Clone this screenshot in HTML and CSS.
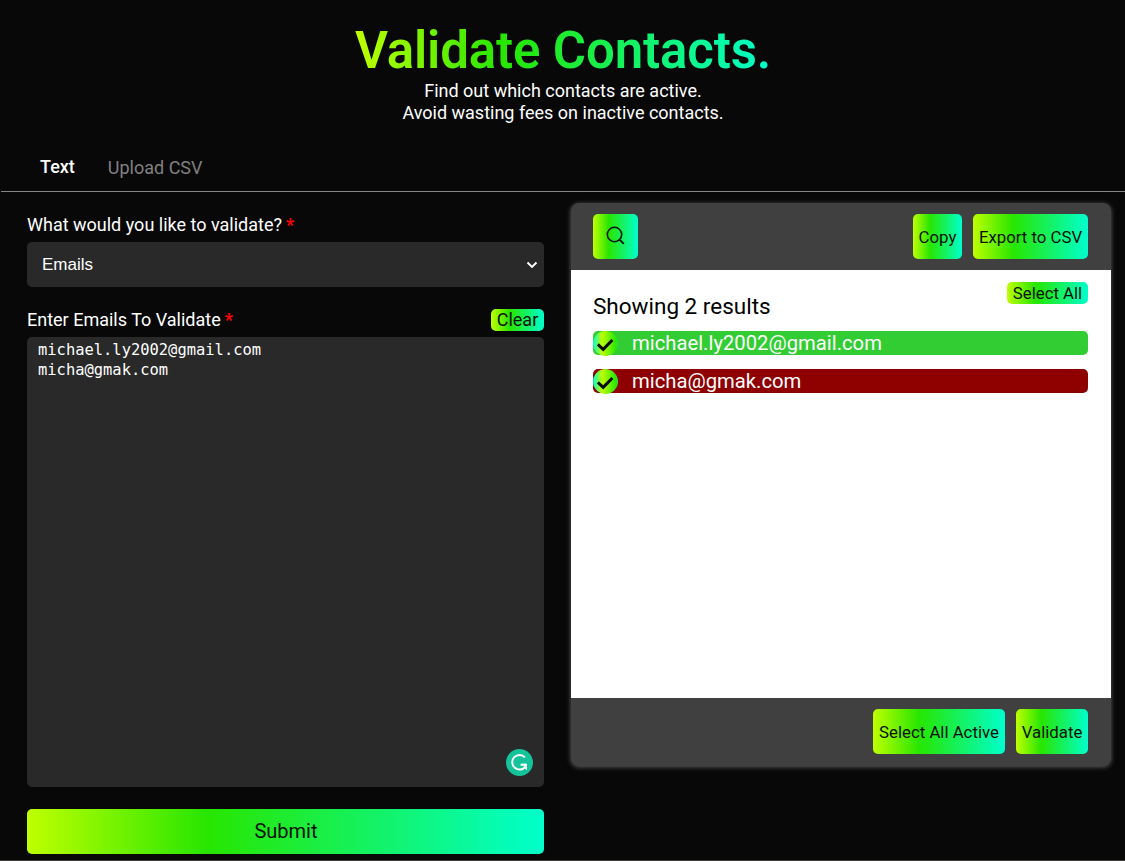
FILE: index.html
```html
<!DOCTYPE html>
<html lang="en">
<head>
<meta charset="utf-8">
<title>Validate Contacts</title>
<link rel="stylesheet" href="styles.css">
</head>
<body>
<div class="page">
  <header class="hero">
    <h1 class="title">Validate Contacts.</h1>
    <p class="subtitle">Find out which contacts are active.<br>Avoid wasting fees on inactive contacts.</p>
  </header>
  <nav class="tabs">
    <span class="tab tab-active">Text</span>
    <span class="tab">Upload CSV</span>
  </nav>
  <main class="columns">
    <section class="form">
      <div class="label-row"><label class="label">What would you like to validate? <b class="required">*</b></label></div>
      <div class="select">
        <span>Emails</span>
        <svg class="chevron" viewBox="0 0 12 8"><path d="M1.5 1.5 L6 5.9 L10.5 1.5" fill="none" stroke="#fff" stroke-width="2"/></svg>
      </div>
      <div class="label-row label-row-second">
        <label class="label">Enter Emails To Validate <b class="required">*</b></label>
        <button class="btn btn-clear">Clear</button>
      </div>
      <div class="textarea">
        <div class="lines">michael.ly2002@gmail.com<br>micha@gmak.com</div>
        <svg class="badge" viewBox="0 0 27 27"><circle cx="13.5" cy="13.5" r="13.5" fill="#15c39a"/><path d="M18.9 8.3 A7.3 7.3 0 1 0 19.4 17.6 M14.6 15.7 H20" fill="none" stroke="#fff" stroke-width="1.9"/><path d="M15.2 14.8 H21 V21.2 L19 19.4 L17.6 18.6 L18.8 16.6 H15.2 Z" fill="#fff"/></svg>
      </div>
      <button class="btn btn-submit">Submit</button>
    </section>
    <section class="results">
      <div class="bar">
        <button class="btn btn-tool btn-search"><svg class="search-icon" viewBox="0 0 19 19"><circle cx="8.5" cy="8.5" r="7.2" fill="none" stroke="#071007" stroke-width="1.5"/><path d="M13.3 13.3 L17.8 17.8" stroke="#071007" stroke-width="1.8"/></svg></button>
        <button class="btn btn-tool btn-copy">Copy</button>
        <button class="btn btn-tool btn-export">Export to CSV</button>
      </div>
      <div class="list">
        <div class="select-row"><button class="btn btn-all">Select All</button></div>
        <h2 class="count">Showing 2 results</h2>
        <div class="item item-active">
          <span class="check"><svg viewBox="0 0 25 25"><path d="M4.8 13.4 L10.2 18.4 L19.4 9" fill="none" stroke="#060c02" stroke-width="3"/></svg></span>
          <span>michael.ly2002@gmail.com</span>
        </div>
        <div class="item item-inactive">
          <span class="check"><svg viewBox="0 0 25 25"><path d="M4.8 13.4 L10.2 18.4 L19.4 9" fill="none" stroke="#060c02" stroke-width="3"/></svg></span>
          <span>micha@gmak.com</span>
        </div>
      </div>
      <div class="bar bar-bottom">
        <button class="btn btn-tool btn-select-active">Select All Active</button>
        <button class="btn btn-tool btn-validate">Validate</button>
      </div>
    </section>
  </main>
</div>
</body>
</html>
```
FILE: styles.css
```css
* { box-sizing: border-box; }
:root { --brand: linear-gradient(to right, #bfff00, #27e600 35%, #00ffcc); }
body { margin: 0; background: #080808; color: #fff; font-family: Roboto, sans-serif; }
.page { height: 861px; overflow: hidden; border-bottom: 1px solid #433c3a; }
.hero { height: 144px; padding: 21px 0 0 1px; display: flex; flex-direction: column; align-items: center; }
.title { margin: 0 0 -1px; font-size: 51px; line-height: 60px; font-weight: 600; letter-spacing: -.15px; background: var(--brand); -webkit-background-clip: text; background-clip: text; color: transparent; }
.subtitle { margin: 0; font-size: 18px; line-height: 22px; text-align: center; }
.tabs { height: 48px; margin-left: 1px; padding: 0 39px; display: flex; gap: 33px; line-height: 46px; border-bottom: 1px solid #858585; }
.tab { font-size: 18px; color: #808080; padding-top: 1px; }
.tab-active { color: #fff; font-weight: 500; padding-top: 0; }
.columns { display: grid; grid-template-columns: 517px 540px; gap: 27px; padding: 11px 0 0 27px; align-items: start; }
.label-row { display: flex; justify-content: space-between; height: 39px; padding-top: 11px; }
.label { font-size: 18px; line-height: 22px; }
.required { color: #f00; font-weight: 700; margin-left: -.5px; }
.select { height: 45px; border-radius: 5px; background: #292929; padding: 0 6px 0 15px; display: flex; align-items: center; justify-content: space-between; font-family: "Liberation Sans", sans-serif; font-size: 17px; }
.chevron { width: 12px; height: 8px; }
.label-row-second { height: 50px; padding-top: 22px; }
.btn { border: 0; padding: 0; border-radius: 5px; background: var(--brand); color: #051005; font-family: Roboto, sans-serif; font-weight: 400; white-space: nowrap; }
.btn-clear { width: 53px; height: 22px; font-size: 18px; line-height: 22px; }
.textarea { position: relative; height: 450px; border-radius: 5px; background: #292929; padding: 3px 11px; }
.lines { font-family: "DejaVu Sans Mono", monospace; font-size: 15.45px; line-height: 20px; }
.badge { position: absolute; right: 11px; bottom: 11px; width: 27px; height: 27px; }
.btn-submit { display: block; width: 517px; height: 45px; margin-top: 22px; padding: 0 0 2px 1px; font-size: 20px; }
.results { height: 563px; border-radius: 8px; background: #404040; box-shadow: 0 1px 5px #606060; display: flex; flex-direction: column; }
.bar { height: 67px; padding: 11px 23px 11px 22px; display: flex; gap: 11px; justify-content: flex-end; }
.bar-bottom { height: 68px; }
.btn-tool { height: 45px; font-size: 16.8px; }
.btn-search { width: 45px; margin-right: auto; display: flex; align-items: center; justify-content: center; }
.search-icon { width: 19px; height: 19px; margin-top: -3px; }
.btn-copy { width: 49px; }
.btn-export { width: 115px; }
.btn-select-active { width: 132px; }
.btn-validate { width: 72px; }
.list { height: 428px; background: #fff; padding: 12px 23px 0 22px; }
.select-row { display: flex; justify-content: flex-end; height: 11px; }
.btn-all { width: 81px; height: 22px; font-size: 16.8px; line-height: 22px; }
.count { width: 300px; margin: 0; color: #000; font-size: 22.5px; line-height: 27px; font-weight: 400; }
.item { height: 24px; margin-top: 14px; border-radius: 5px; display: flex; align-items: center; gap: 14px; font-size: 20.25px; }
.count + .item { margin-top: 11px; }
.item-active { background: #32cd32; }
.item-inactive { background: #8f0000; }
.check { flex: none; width: 25px; height: 25px; border-radius: 50%; background: linear-gradient(to right, #00ffcc, #bfff00 36%, #27e600 92%, #27e650); }
.check svg { display: block; }
```
